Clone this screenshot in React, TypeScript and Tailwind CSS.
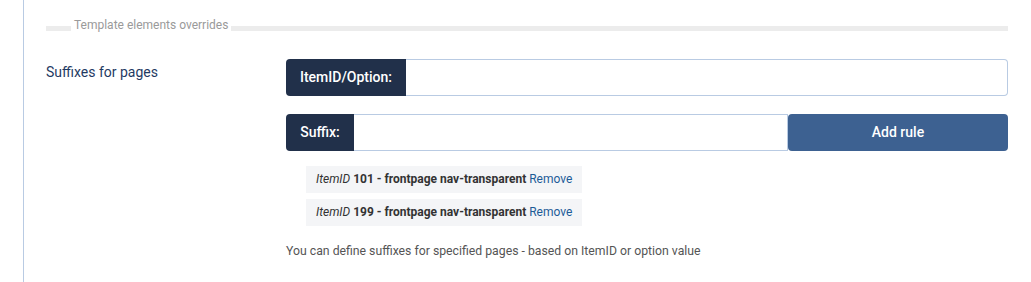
const rules = [
  { id: 101, suffix: "frontpage nav-transparent" },
  { id: 199, suffix: "frontpage nav-transparent" },
];

export default function App() {
  return (
    <div className="h-[282px] bg-white pl-[23px] font-['Roboto',sans-serif]">
      <div className="h-full border-l border-[#b9cbe3] pl-[22px] pr-[23px] pt-[17px]">
        <div className="flex items-start">
          <span className="mt-[9px] h-[5px] w-[25px] bg-[#ececec]" />
          <span className="mx-[3px] text-[12px] leading-[16px] text-[#9a9a9a]">Template elements overrides</span>
          <span className="mt-[9px] h-[5px] flex-1 bg-[#ececec]" />
        </div>

        <div className="mt-[26px] flex">
          <div className="w-[240px] pt-[3px] text-[14px] leading-[20px] text-[#1f3a63]">Suffixes for pages</div>
          <div className="flex-1">
            <div className="flex h-[37px]">
              <div className="flex w-[120px] items-center justify-center rounded-l-[4px] bg-[#21304a] text-[14px] font-medium text-white">
                ItemID/Option:
              </div>
              <input className="flex-1 rounded-r-[4px] border border-l-0 border-[#b9cbe3] outline-none" />
            </div>

            <div className="mt-[18px] flex h-[37px]">
              <div className="flex w-[68px] items-center justify-center rounded-l-[4px] bg-[#21304a] text-[14px] font-medium text-white">
                Suffix:
              </div>
              <input className="w-[434px] border border-l-0 border-[#b9cbe3] outline-none" />
              <button className="flex-1 rounded-[4px] bg-[#3d6191] text-[14px] font-medium text-white">Add rule</button>
            </div>

            <div className="mt-[15px] flex flex-col items-start gap-[6px] pl-[20px]">
              {rules.map((r) => (
                <div key={r.id} className="h-[27px] bg-[#f4f5f7] px-[10px] text-[12px] leading-[27px] text-[#333]">
                  <i>ItemID</i> <b>{r.id} - {r.suffix}</b> <a className="cursor-pointer text-[#1d5c97]">Remove</a>
                </div>
              ))}
            </div>

            <p className="mt-[17px] text-[12.25px] leading-[16px] text-[#555]">
              You can define suffixes for specified pages - based on ItemID or option value
            </p>
          </div>
        </div>
      </div>
    </div>
  );
}
